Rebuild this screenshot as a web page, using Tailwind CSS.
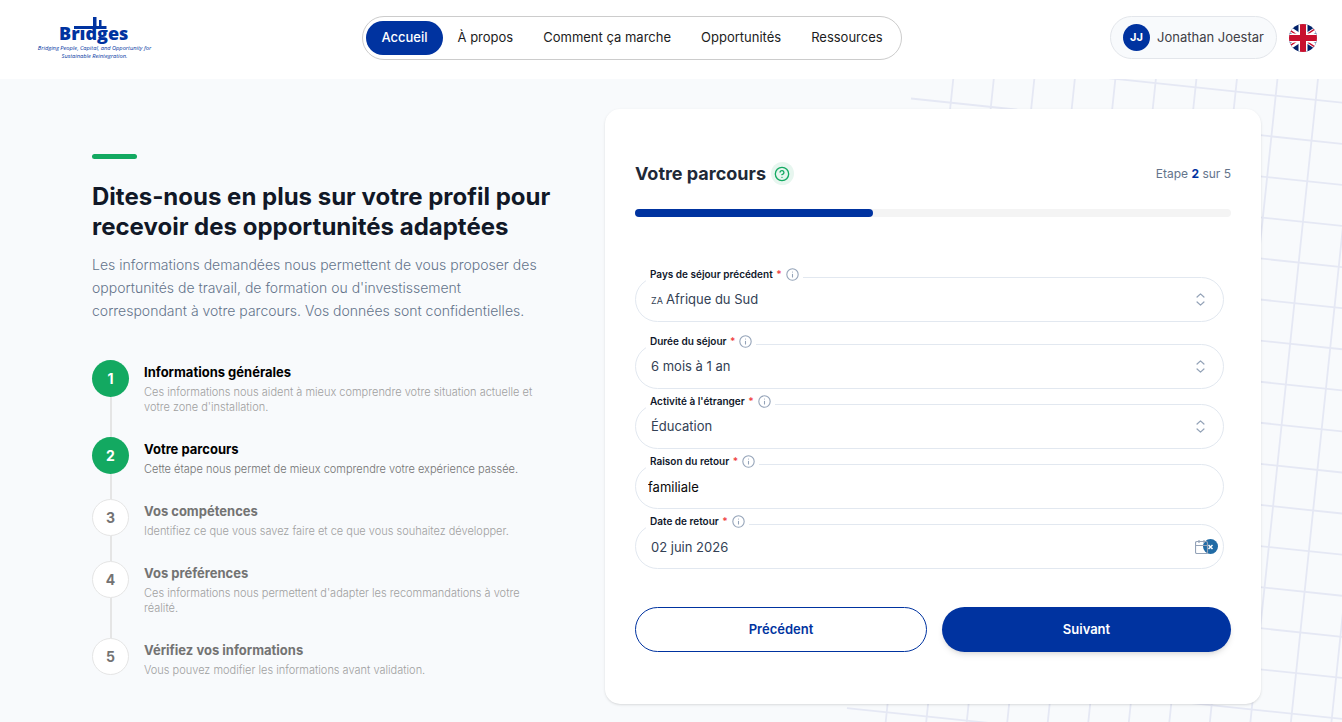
<!DOCTYPE html>
<html lang="fr">
<head>
    <meta charset="UTF-8">
    <meta name="viewport" content="width=device-width, initial-scale=1.0">
    <title>Bridges - Votre parcours</title>
    <script src="https://cdn.jsdelivr.net/npm/@tailwindcss/browser@4"></script>
</head>
<body class="min-h-screen flex flex-col overflow-x-hidden bg-[#f8fafc] font-['Inter',sans-serif] text-[#1f2937]">

    <header class="flex items-center justify-between bg-white h-[79px] pb-[4px] pl-[36px] pr-[25px]">
        <a href="#" aria-label="Bridges">
            <svg width="118" height="50" viewBox="36 12 118 50" fill="#0033a0">
                <text x="59" y="39" font-family="Open Sans, sans-serif" font-weight="800" font-size="18">Brıdges</text>
                <path d="M74 25h32.500v3H74zM93 16h3.500v12H93zM99 19h2.500v7H99z"/>
                <g font-family="Open Sans, sans-serif" font-style="italic" font-weight="500" font-size="5.700" text-anchor="middle">
                    <text x="94.500" y="49">Bridging People, Capital, and Opportunity for</text>
                    <text x="94.500" y="57">Sustainable Reintegration.</text>
                </g>
            </svg>
        </a>

        <nav class="flex items-center h-[44px] px-[3px] rounded-full border border-[#cccccc] bg-white text-[13px] text-[#1c1c1c]">
            <a href="#" class="flex items-center h-[34px] px-[15px] rounded-full bg-[#0033a0] text-white font-medium">Accueil</a>
            <a href="#" class="px-[15px]">À propos</a>
            <a href="#" class="px-[15px]">Comment ça marche</a>
            <a href="#" class="px-[15px]">Opportunités</a>
            <a href="#" class="px-[15px]">Ressources</a>
        </nav>

        <div class="flex items-center gap-3">
            <button type="button" class="flex items-center gap-[7px] h-[43px] px-[12px] rounded-full border border-[#e3e6eb] bg-[#f8fafc] text-[13px] text-[#3f3f46]">
                <span class="flex items-center justify-center size-[27px] rounded-full bg-[#0033a0] text-white text-[11px] font-bold">JJ</span>
                Jonathan Joestar
            </button>
            <button type="button" aria-label="English">
                <svg class="block" width="28" height="28" viewBox="0 0 28 28">
                    <defs><clipPath id="round"><circle cx="14" cy="14" r="14"/></clipPath></defs>
                    <g clip-path="url(#round)">
                        <path fill="#012169" d="M0 0h28v28H0z"/>
                        <path stroke="#fff" stroke-width="5" d="M-4 2l36 24M-4 26L32 2"/>
                        <path stroke="#c8102e" stroke-width="1.500" d="M-4 3l18 12M14 13L32 1M-4 25l18-12M14 15l18 12"/>
                        <path stroke="#fff" stroke-width="9" d="M14 0v28M0 14h28"/>
                        <path stroke="#c8102e" stroke-width="6" d="M14 0v28M0 14h28"/>
                    </g>
                </svg>
            </button>
        </div>
    </header>

    <main class="relative flex-1 overflow-hidden pl-[92px] pr-[81px] pt-[30px] pb-[18px]">
        <!-- tilted grid behind the card -->
        <svg class="absolute right-0 top-0" width="542" height="643" viewBox="800 79 542 643" fill="none" stroke="#e5e8f4" stroke-width="1.800" aria-hidden="true">
            <g transform="translate(911 98.500) rotate(6)">
                <path d="M0-40.900h600M0 0h600M0 40.900h600M0 81.700h600M0 122.600h600M0 163.400h600M0 204.300h600M0 245.200h600M0 286h600M0 326.900h600M0 367.700h600M0 408.600h600M0 449.500h600M0 490.300h600M0 531.200h600M0 572h600M0 612.900h600"/>
                <path d="M40-80v760M80.300-80v760M120.600-80v760M160.900-80v760M201.200-80v760M241.500-80v760M281.800-80v760M322.100-80v760M362.400-80v760M402.700-80v760M443-80v760M483.300-80v760M523.600-80v760"/>
            </g>
        </svg>

        <div class="relative grid grid-cols-[465fr_656fr] gap-12">
            <section class="pt-[45px]">
                <div class="w-[45px] h-[5px] rounded-full bg-[#13a961]"></div>
                <h1 class="mt-[23px] text-[24px] leading-[30px] font-bold text-[#111827] whitespace-nowrap">
                    Dites-nous en plus sur votre profil pour<br>recevoir des opportunités adaptées
                </h1>
                <p class="mt-[11px] text-[14px] leading-[23px] font-light text-[#64748b] whitespace-nowrap">
                    Les informations demandées nous permettent de vous proposer des<br>
                    opportunités de travail, de formation ou d'investissement<br>
                    correspondant à votre parcours. Vos données sont confidentielles.
                </p>

                <ol class="mt-[38px] text-[11px] leading-[15px] font-light text-[#a0a0a0]">
                    <li class="flex gap-[15px]">
                        <div class="flex flex-col items-center">
                            <span class="flex items-center justify-center size-[37px] shrink-0 rounded-full bg-[#13a961] text-white text-[14px] font-bold">1</span>
                            <span class="w-[2px] flex-1 bg-[#e5e5e5]"></span>
                        </div>
                        <div class="pt-[3px] pb-[22px]">
                            <h2 class="mb-[3px] text-[13px] leading-[19px] font-bold text-black">Informations générales</h2>
                            <p>Ces informations nous aident à mieux comprendre votre situation actuelle et<br>votre zone d'installation.</p>
                        </div>
                    </li>
                    <li class="flex gap-[15px]">
                        <div class="flex flex-col items-center">
                            <span class="flex items-center justify-center size-[37px] shrink-0 rounded-full bg-[#13a961] text-white text-[14px] font-bold">2</span>
                            <span class="w-[2px] flex-1 bg-[#e5e5e5]"></span>
                        </div>
                        <div class="pt-[3px] pb-[22px]">
                            <h2 class="mb-[3px] text-[13px] leading-[19px] font-bold text-black">Votre parcours</h2>
                            <p class="text-[#737373]">Cette étape nous permet de mieux comprendre votre expérience passée.</p>
                        </div>
                    </li>
                    <li class="flex gap-[15px]">
                        <div class="flex flex-col items-center">
                            <span class="flex items-center justify-center size-[37px] shrink-0 rounded-full border border-[#e5e5e5] bg-white text-[#737373] text-[14px] font-bold">3</span>
                            <span class="w-[2px] flex-1 bg-[#e5e5e5]"></span>
                        </div>
                        <div class="pt-[3px] pb-[22px]">
                            <h2 class="mb-[3px] text-[13px] leading-[19px] font-bold text-[#737373]">Vos compétences</h2>
                            <p>Identifiez ce que vous savez faire et ce que vous souhaitez développer.</p>
                        </div>
                    </li>
                    <li class="flex gap-[15px]">
                        <div class="flex flex-col items-center">
                            <span class="flex items-center justify-center size-[37px] shrink-0 rounded-full border border-[#e5e5e5] bg-white text-[#737373] text-[14px] font-bold">4</span>
                            <span class="w-[2px] flex-1 bg-[#e5e5e5]"></span>
                        </div>
                        <div class="pt-[3px] pb-[22px]">
                            <h2 class="mb-[3px] text-[13px] leading-[19px] font-bold text-[#737373]">Vos préférences</h2>
                            <p>Ces informations nous permettent d'adapter les recommandations à votre<br>réalité.</p>
                        </div>
                    </li>
                    <li class="flex gap-[15px]">
                        <span class="flex items-center justify-center size-[37px] shrink-0 rounded-full border border-[#e5e5e5] bg-white text-[#737373] text-[14px] font-bold">5</span>
                        <div class="pt-[3px]">
                            <h2 class="mb-[3px] text-[13px] leading-[19px] font-bold text-[#737373]">Vérifiez vos informations</h2>
                            <p>Vous pouvez modifier les informations avant validation.</p>
                        </div>
                    </li>
                </ol>
            </section>

            <section class="self-start rounded-[15px] bg-white shadow-sm px-[30px] pt-[53px] pb-[52px]">
                <div class="flex items-center justify-between h-[23px]">
                    <div class="flex items-center gap-[5px]">
                        <h2 class="text-[18px] leading-[23px] font-bold">Votre parcours</h2>
                        <button type="button" aria-label="Aide" class="flex items-center justify-center size-[23px] rounded-full bg-[#e7f6ef] text-[#13a961]">
                            <svg width="16" height="16" viewBox="0 0 24 24" fill="none" stroke="currentColor" stroke-width="2" stroke-linecap="round" stroke-linejoin="round"><circle cx="12" cy="12" r="10"/><path d="M9.090 9a3 3 0 0 1 5.830 1c0 2-3 3-3 3M12 17h.01"/></svg>
                        </button>
                    </div>
                    <p class="text-[12px] text-[#64748b]">Etape <strong class="text-[#0033a0]">2</strong> sur 5</p>
                </div>
                <div class="mt-[24px] h-[8px] rounded-full bg-[#f4f4f4]">
                    <div class="h-full w-2/5 rounded-full bg-[#0033a0]"></div>
                </div>

                <form class="mt-[60px]">
                    <div class="flex flex-col gap-[15px] pr-[7px] text-[13px] text-[#334155]">
                        <div class="relative mb-[7px]">
                            <div class="absolute -top-[10px] left-[11px] z-10 flex items-center gap-[4px] h-[15px] px-[4px] bg-white">
                                <label for="country" class="text-[10px] font-semibold text-[#0f172a]">Pays de séjour précédent <span class="ml-px text-[#ef4444]">*</span></label>
                                <svg class="text-[#94a3b8]" width="13" height="13" viewBox="0 0 24 24" fill="none" stroke="currentColor" stroke-width="2" stroke-linecap="round"><circle cx="12" cy="12" r="10.500"/><path d="M12 16.500v-5M12 7.500h.01"/></svg>
                            </div>
                            <span class="absolute left-[16px] top-[17px] text-[9px] leading-[13px]" aria-hidden="true">ZA</span>
                            <select id="country" class="block w-full h-[45px] pl-[30px] pr-10 appearance-none rounded-full border border-[#e2e8f0] bg-white">
                                <option>Afrique du Sud</option>
                            </select>
                            <svg class="absolute right-[16px] top-[15px] pointer-events-none text-[#94a3b8]" width="15" height="15" viewBox="0 0 24 24" fill="none" stroke="currentColor" stroke-width="2" stroke-linecap="round" stroke-linejoin="round"><path d="M6.500 8l5.500-5 5.500 5M6.500 16l5.500 5 5.500-5"/></svg>
                        </div>

                        <div class="relative">
                            <div class="absolute -top-[10px] left-[11px] z-10 flex items-center gap-[4px] h-[15px] px-[4px] bg-white">
                                <label for="duration" class="text-[10px] font-semibold text-[#0f172a]">Durée du séjour <span class="ml-px text-[#ef4444]">*</span></label>
                                <svg class="text-[#94a3b8]" width="13" height="13" viewBox="0 0 24 24" fill="none" stroke="currentColor" stroke-width="2" stroke-linecap="round"><circle cx="12" cy="12" r="10.500"/><path d="M12 16.500v-5M12 7.500h.01"/></svg>
                            </div>
                            <select id="duration" class="block w-full h-[45px] pl-[15px] pr-10 appearance-none rounded-full border border-[#e2e8f0] bg-white">
                                <option>6 mois à 1 an</option>
                            </select>
                            <svg class="absolute right-[16px] top-[15px] pointer-events-none text-[#94a3b8]" width="15" height="15" viewBox="0 0 24 24" fill="none" stroke="currentColor" stroke-width="2" stroke-linecap="round" stroke-linejoin="round"><path d="M6.500 8l5.500-5 5.500 5M6.500 16l5.500 5 5.500-5"/></svg>
                        </div>

                        <div class="relative">
                            <div class="absolute -top-[10px] left-[11px] z-10 flex items-center gap-[4px] h-[15px] px-[4px] bg-white">
                                <label for="activity" class="text-[10px] font-semibold text-[#0f172a]">Activité à l'étranger <span class="ml-px text-[#ef4444]">*</span></label>
                                <svg class="text-[#94a3b8]" width="13" height="13" viewBox="0 0 24 24" fill="none" stroke="currentColor" stroke-width="2" stroke-linecap="round"><circle cx="12" cy="12" r="10.500"/><path d="M12 16.500v-5M12 7.500h.01"/></svg>
                            </div>
                            <select id="activity" class="block w-full h-[45px] pl-[15px] pr-10 appearance-none rounded-full border border-[#e2e8f0] bg-white">
                                <option>Éducation</option>
                            </select>
                            <svg class="absolute right-[16px] top-[15px] pointer-events-none text-[#94a3b8]" width="15" height="15" viewBox="0 0 24 24" fill="none" stroke="currentColor" stroke-width="2" stroke-linecap="round" stroke-linejoin="round"><path d="M6.500 8l5.500-5 5.500 5M6.500 16l5.500 5 5.500-5"/></svg>
                        </div>

                        <div class="relative">
                            <div class="absolute -top-[10px] left-[11px] z-10 flex items-center gap-[4px] h-[15px] px-[4px] bg-white">
                                <label for="reason" class="text-[10px] font-semibold text-[#0f172a]">Raison du retour <span class="ml-px text-[#ef4444]">*</span></label>
                                <svg class="text-[#94a3b8]" width="13" height="13" viewBox="0 0 24 24" fill="none" stroke="currentColor" stroke-width="2" stroke-linecap="round"><circle cx="12" cy="12" r="10.500"/><path d="M12 16.500v-5M12 7.500h.01"/></svg>
                            </div>
                            <input type="text" id="reason" name="reason" value="familiale" class="block w-full h-[45px] px-[12px] rounded-full border border-[#e2e8f0] bg-white text-[#0a0a0a]">
                        </div>

                        <div class="relative">
                            <div class="absolute -top-[10px] left-[11px] z-10 flex items-center gap-[4px] h-[15px] px-[4px] bg-white">
                                <label for="date" class="text-[10px] font-semibold text-[#0f172a]">Date de retour <span class="ml-px text-[#ef4444]">*</span></label>
                                <svg class="text-[#94a3b8]" width="13" height="13" viewBox="0 0 24 24" fill="none" stroke="currentColor" stroke-width="2" stroke-linecap="round"><circle cx="12" cy="12" r="10.500"/><path d="M12 16.500v-5M12 7.500h.01"/></svg>
                            </div>
                            <input type="text" id="date" name="date" value="02 juin 2026" class="block w-full h-[45px] pl-[15px] pr-10 rounded-full border border-[#e2e8f0] bg-white">
                            <button type="button" aria-label="Effacer la date" class="absolute right-[6px] top-[15px]">
                                <svg width="23" height="15" viewBox="0 0 23 15" fill="none">
                                    <circle cx="15.500" cy="7.500" r="7.500" fill="#216ba5"/>
                                    <path d="M13.500 6l4 4M17.500 6l-4 4" stroke="#fff" stroke-width="1.500"/>
                                    <path d="M2 2.500h9q1.500 0 1.500 1.500v9q0 1.500-1.500 1.500H2Q.5 14.500.5 13V4Q.5 2.500 2 2.500zM.5 6.500h12M4 1v3M9 1v3" stroke="#94a3b8" stroke-width="1.200"/>
                                </svg>
                            </button>
                        </div>
                    </div>

                    <div class="mt-[38px] grid grid-cols-[292fr_289fr] gap-[15px] text-[13px] font-semibold">
                        <button type="button" class="h-[45px] rounded-full border border-[#0033a0] bg-white text-[#0033a0]">Précédent</button>
                        <button type="submit" class="h-[45px] rounded-full bg-[#0033a0] text-white shadow-md">Suivant</button>
                    </div>
                </form>
            </section>
        </div>
    </main>

</body>
</html>
